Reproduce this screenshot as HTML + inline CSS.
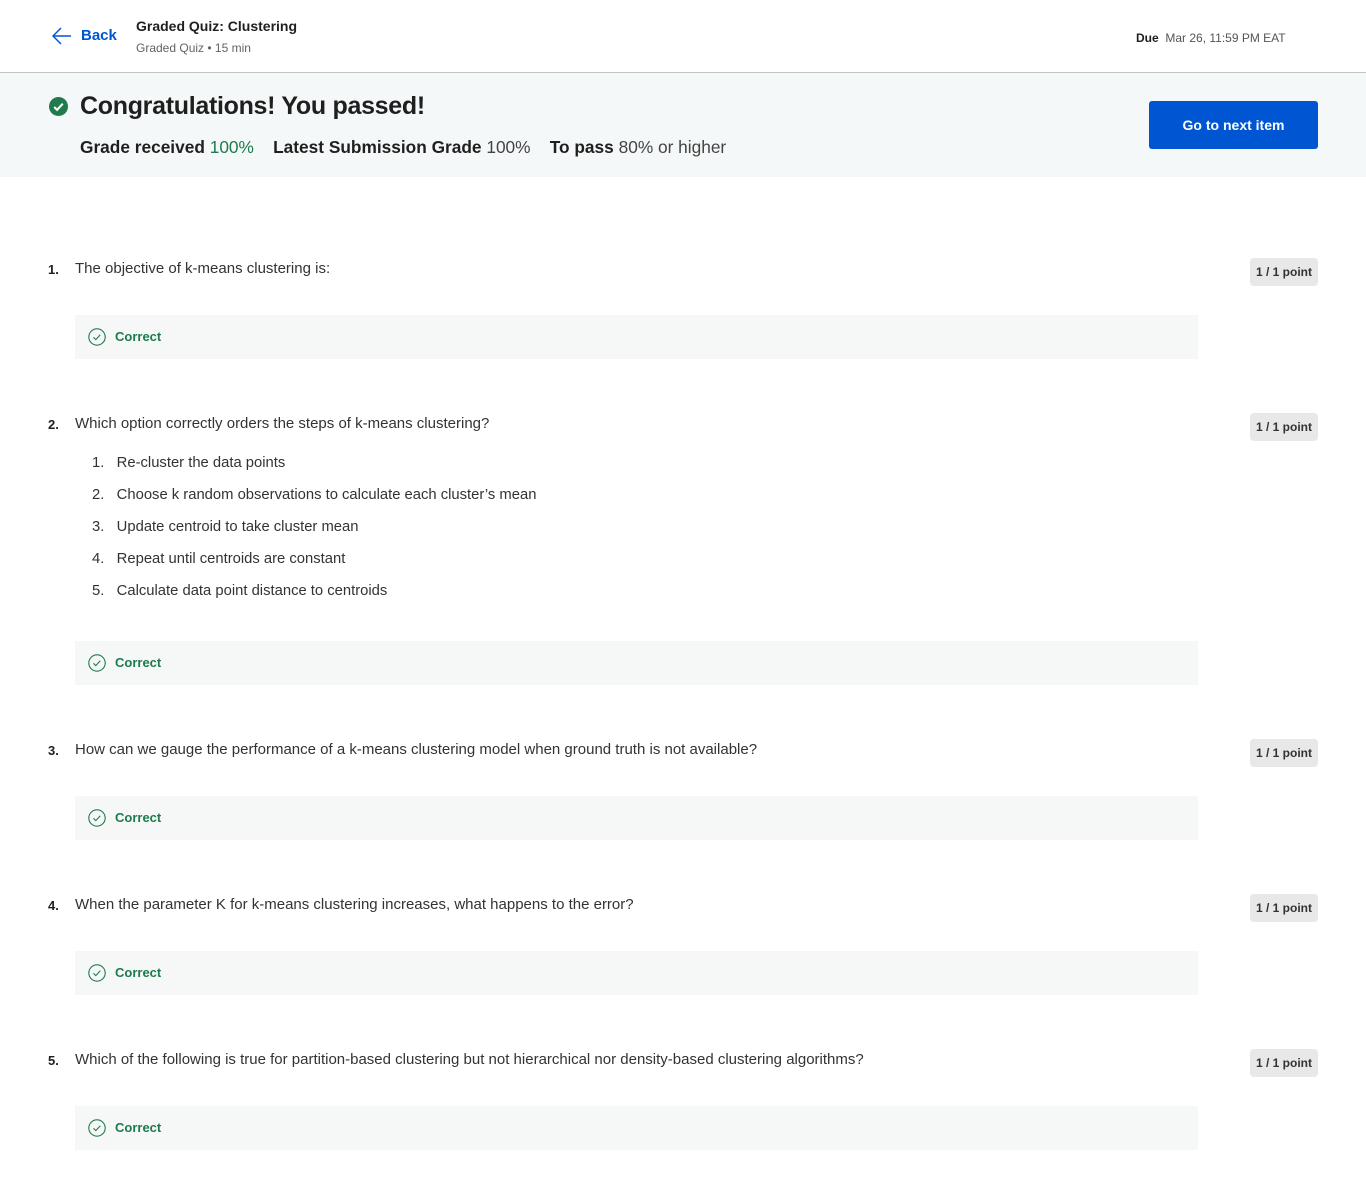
<!DOCTYPE html>
<html><head><style>
body{margin:0;width:1366px;height:1201px;background:#fff;font-family:"Liberation Sans",sans-serif;color:#1f1f1f;position:relative;overflow:hidden}
.a{position:absolute;white-space:nowrap}
.q{font-size:15px;color:#333}
.n{font-size:13px;font-weight:bold;color:#1f1f1f}
.pt{position:absolute;left:1250px;width:68px;height:28px;background:#e8e8e8;border-radius:4px;font-size:12px;font-weight:bold;color:#333;line-height:28px;text-align:center}
.box{position:absolute;left:75px;width:1123px;height:44px;background:#f5f8f7}
.box svg{position:absolute;left:13px;top:13px}
.box span{position:absolute;left:40px;top:14px;font-size:13px;font-weight:bold;color:#1f7a4d}
.li{font-size:14.8px;color:#333}
</style></head><body>
<svg class="a" style="left:52px;top:27px" width="20" height="18" viewBox="0 0 20 18"><path d="M19 9H2M9 1L1 9l8 8" fill="none" stroke="#0056d2" stroke-width="1.5"/></svg>
<div class="a" style="left:81px;top:27px;font-size:15px;font-weight:bold;color:#0056d2">Back</div>
<div class="a" style="left:136px;top:18px;font-size:14px;font-weight:bold">Graded Quiz: Clustering</div>
<div class="a" style="left:136px;top:41px;font-size:12px;color:#636363">Graded Quiz • 15 min</div>
<div class="a" style="left:1136px;top:31px;font-size:12px"><b>Due</b> &nbsp;<span style="color:#555">Mar 26, 11:59 PM EAT</span></div>
<div class="a" style="left:0;top:72px;width:1366px;height:1px;background:#c4c4c4"></div>
<div class="a" style="left:0;top:73px;width:1366px;height:104px;background:#f5f8f8"></div>
<svg class="a" style="left:49px;top:97px" width="19" height="19" viewBox="0 0 20 20"><circle cx="10" cy="10" r="10" fill="#1f7a4d"/><path d="M5.5 10.5l3 3 6-6.5" fill="none" stroke="#fff" stroke-width="2.2"/></svg>
<div class="a" style="left:80px;top:92px;font-size:25px;font-weight:bold;color:#1f1f1f;letter-spacing:-0.3px">Congratulations! You passed!</div>
<div class="a" style="left:80px;top:137px;font-size:17.3px"><b>Grade received</b> <span style="color:#1f7a4d">100%</span>&nbsp;&nbsp;&nbsp; <b>Latest Submission Grade</b> <span style="color:#444">100%</span>&nbsp;&nbsp;&nbsp; <b>To pass</b> <span style="color:#444">80% or higher</span></div>
<div class="a" style="left:1149px;top:101px;width:169px;height:48px;background:#0056d2;border-radius:3px;color:#fff;font-size:14px;font-weight:bold;line-height:48px;text-align:center">Go to next item</div>

<div class="a n" style="left:48px;top:262px">1.</div>
<div class="a q" style="left:75px;top:260px">The objective of k-means clustering is:</div>
<div class="pt" style="top:258px">1 / 1 point</div>
<div class="box" style="top:315px"><svg width="18" height="18" viewBox="0 0 18 18"><circle cx="9" cy="9" r="8.2" fill="none" stroke="#1f7a4d" stroke-width="1.1"/><path d="M5.5 9.3l2.3 2.3 4.5-4.8" fill="none" stroke="#1f7a4d" stroke-width="1.1"/></svg><span>Correct</span></div>

<div class="a n" style="left:48px;top:417px">2.</div>
<div class="a q" style="left:75px;top:415px">Which option correctly orders the steps of k-means clustering?</div>
<div class="pt" style="top:413px">1 / 1 point</div>
<div class="a li" style="left:92px;top:455px">1.&nbsp;&nbsp;&nbsp;Re-cluster the data points</div>
<div class="a li" style="left:92px;top:487px">2.&nbsp;&nbsp;&nbsp;Choose k random observations to calculate each cluster’s mean</div>
<div class="a li" style="left:92px;top:519px">3.&nbsp;&nbsp;&nbsp;Update centroid to take cluster mean</div>
<div class="a li" style="left:92px;top:551px">4.&nbsp;&nbsp;&nbsp;Repeat until centroids are constant</div>
<div class="a li" style="left:92px;top:583px">5.&nbsp;&nbsp;&nbsp;Calculate data point distance to centroids</div>
<div class="box" style="top:641px"><svg width="18" height="18" viewBox="0 0 18 18"><circle cx="9" cy="9" r="8.2" fill="none" stroke="#1f7a4d" stroke-width="1.1"/><path d="M5.5 9.3l2.3 2.3 4.5-4.8" fill="none" stroke="#1f7a4d" stroke-width="1.1"/></svg><span>Correct</span></div>

<div class="a n" style="left:48px;top:743px">3.</div>
<div class="a q" style="left:75px;top:741px">How can we gauge the performance of a k-means clustering model when ground truth is not available?</div>
<div class="pt" style="top:739px">1 / 1 point</div>
<div class="box" style="top:796px"><svg width="18" height="18" viewBox="0 0 18 18"><circle cx="9" cy="9" r="8.2" fill="none" stroke="#1f7a4d" stroke-width="1.1"/><path d="M5.5 9.3l2.3 2.3 4.5-4.8" fill="none" stroke="#1f7a4d" stroke-width="1.1"/></svg><span>Correct</span></div>

<div class="a n" style="left:48px;top:898px">4.</div>
<div class="a q" style="left:75px;top:896px">When the parameter K for k-means clustering increases, what happens to the error?</div>
<div class="pt" style="top:894px">1 / 1 point</div>
<div class="box" style="top:951px"><svg width="18" height="18" viewBox="0 0 18 18"><circle cx="9" cy="9" r="8.2" fill="none" stroke="#1f7a4d" stroke-width="1.1"/><path d="M5.5 9.3l2.3 2.3 4.5-4.8" fill="none" stroke="#1f7a4d" stroke-width="1.1"/></svg><span>Correct</span></div>

<div class="a n" style="left:48px;top:1053px">5.</div>
<div class="a q" style="left:75px;top:1051px">Which of the following is true for partition-based clustering but not hierarchical nor density-based clustering algorithms?</div>
<div class="pt" style="top:1049px">1 / 1 point</div>
<div class="box" style="top:1106px"><svg width="18" height="18" viewBox="0 0 18 18"><circle cx="9" cy="9" r="8.2" fill="none" stroke="#1f7a4d" stroke-width="1.1"/><path d="M5.5 9.3l2.3 2.3 4.5-4.8" fill="none" stroke="#1f7a4d" stroke-width="1.1"/></svg><span>Correct</span></div>
</body></html>
